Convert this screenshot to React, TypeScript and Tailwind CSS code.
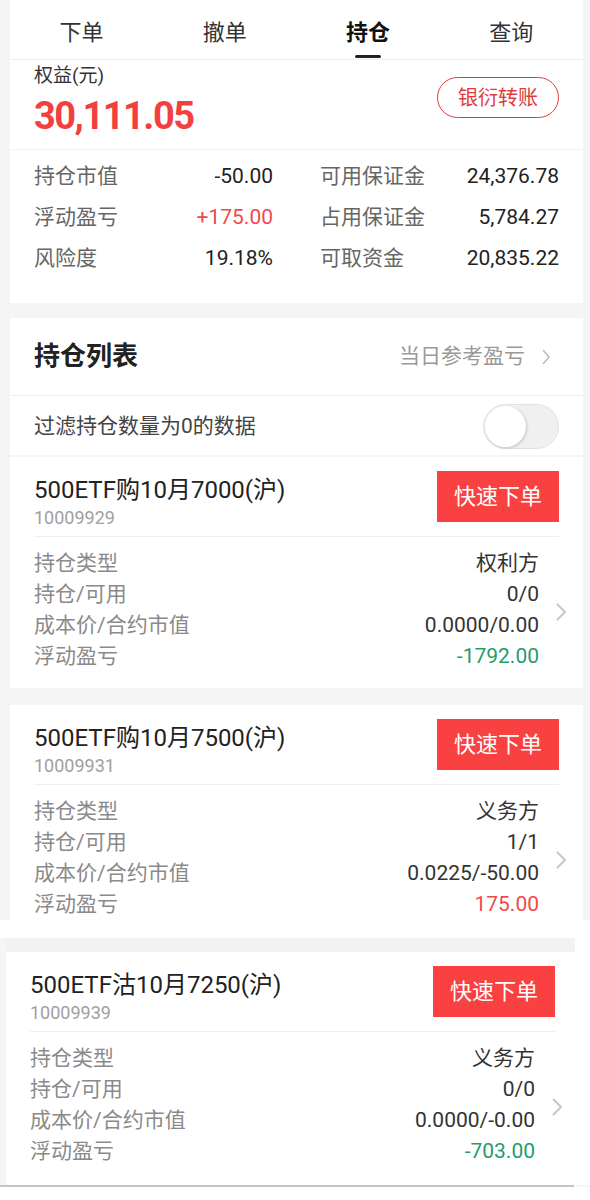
import React from "react";

const FONT = { fontFamily: 'Roboto, "Noto Sans CJK SC", "Noto Sans", sans-serif' };

function Chevron({ w = 11, h = 18, color = "#c8c8c8", sw = 2 }: { w?: number; h?: number; color?: string; sw?: number }) {
  return (
    <svg width={w} height={h} viewBox={`0 0 ${w} ${h}`} fill="none">
      <polyline points={`1.5,1.5 ${w - 2},${h / 2} 1.5,${h - 1.5}`} stroke={color} strokeWidth={sw} strokeLinecap="round" strokeLinejoin="round" />
    </svg>
  );
}

type Row = { label: string; value: string; color?: string };

function PositionCard({ title, code, rows, className = "" }: { title: string; code: string; rows: Row[]; className?: string }) {
  return (
    <div className={`bg-white pt-[14px] ${className}`}>
      <div className="flex justify-between items-start h-[51px] px-[24px]">
        <div className="pt-[5px]">
          <div className="text-[24px] leading-[28px] text-[#222]">{title}</div>
          <div className="text-[18px] leading-[28px] text-[#a0a0a0]">{code}</div>
        </div>
        <div className="w-[122px] h-[51px] bg-[#fa4141] text-white text-[22px] flex items-center justify-center">快速下单</div>
      </div>
      <div className="px-[24px] pt-[14px]">
        <div className="border-t border-[#efefef]" />
      </div>
      <div className="flex items-center pt-[11px] pl-[24px]">
        <div className="flex-1">
          {rows.map((r) => (
            <div key={r.label} className="flex justify-between h-[31px] leading-[31px] text-[21px]">
              <span className="text-[#8a8a8a]">{r.label}</span>
              <span style={{ color: r.color ?? "#333" }}>{r.value}</span>
            </div>
          ))}
        </div>
        <div className="w-[44px] flex justify-center pt-[4px]">
          <Chevron />
        </div>
      </div>
    </div>
  );
}

export default function App() {
  const tabs = ["下单", "撤单", "持仓", "查询"];
  const stats: [string, string, string?][] = [
    ["持仓市值", "-50.00"],
    ["可用保证金", "24,376.78"],
    ["浮动盈亏", "+175.00", "#f04a4a"],
    ["占用保证金", "5,784.27"],
    ["风险度", "19.18%"],
    ["可取资金", "20,835.22"],
  ];
  return (
    <div className="w-[590px] min-h-[1200px] bg-[#f5f5f5]" style={FONT}>
      {/* account summary */}
      <div className="ml-[10px] w-[573px] bg-white">
        <div className="flex h-[60px] border-b border-[#eeeeee]">
          {tabs.map((t) => (
            <div key={t} className="flex-1 flex flex-col items-center pt-[19px]">
              <div className={`text-[22px] leading-[28px] ${t === "持仓" ? "font-bold text-[#111]" : "text-[#333]"}`}>{t}</div>
              {t === "持仓" && <div className="mt-[8px] h-[3px] w-[26px] rounded-full bg-[#222]" />}
            </div>
          ))}
        </div>
        <div className="flex justify-between px-[24px] h-[90px] border-b border-[#f2f2f2]">
          <div className="pt-[4px]">
            <div className="text-[19px] leading-[24px] text-[#333]">权益(元)</div>
            <div className="mt-[5px] text-[38px] leading-[46px] font-bold text-[#f43f3f] tracking-[-1.5px]">30,111.05</div>
          </div>
          <div className="mt-[17px] w-[122px] h-[41px] rounded-full border-[1.5px] border-[#e23a3a] text-[#e23a3a] text-[20px] flex items-center justify-center">银衍转账</div>
        </div>
        <div className="grid grid-cols-2 gap-x-[47px] px-[24px] pt-[6px] pb-[24px]">
          {stats.map(([l, v, c]) => (
            <div key={l} className="flex justify-between h-[41px] leading-[41px] text-[21px]">
              <span className="text-[#666]">{l}</span>
              <span style={{ color: c ?? "#222" }}>{v}</span>
            </div>
          ))}
        </div>
      </div>

      {/* list header */}
      <div className="ml-[10px] w-[573px] bg-white mt-[15px]">
        <div className="flex items-center justify-between h-[78px] pl-[24px] pr-[32px] border-b border-[#efefef]">
          <div className="text-[26px] font-bold text-[#222]">持仓列表</div>
          <div className="flex items-center gap-[17px] text-[21px] text-[#999]">
            <span>当日参考盈亏</span>
            <Chevron w={9} h={16} color="#bbbbbb" sw={1.6} />
          </div>
        </div>
        <div className="flex items-center justify-between h-[59px] px-[24px] pt-[2px]">
          <span className="text-[21px] text-[#444]">过滤持仓数量为0的数据</span>
          <div className="w-[76px] h-[45px] rounded-full bg-[#f0f0f0] border border-[#e2e2e2] p-[1px] flex items-center">
            <div className="w-[41px] h-[41px] rounded-full bg-white shadow-[1px_1px_3px_rgba(0,0,0,0.18)]" />
          </div>
        </div>
      </div>

      <PositionCard
        className="ml-[10px] w-[573px] mt-[2px] pb-[16px]"
        title="500ETF购10月7000(沪)"
        code="10009929"
        rows={[
          { label: "持仓类型", value: "权利方" },
          { label: "持仓/可用", value: "0/0" },
          { label: "成本价/合约市值", value: "0.0000/0.00" },
          { label: "浮动盈亏", value: "-1792.00", color: "#1f9d6b" },
        ]}
      />
      <div className="h-[17px]" />
      <div className="ml-[10px] w-[573px] h-[215px] overflow-hidden">
        <PositionCard
          className="pb-[17px]"
          title="500ETF购10月7500(沪)"
          code="10009931"
          rows={[
            { label: "持仓类型", value: "义务方" },
            { label: "持仓/可用", value: "1/1" },
            { label: "成本价/合约市值", value: "0.0225/-50.00" },
            { label: "浮动盈亏", value: "175.00", color: "#f04a4a" },
          ]}
        />
      </div>
      <div className="h-[18px] bg-white" />
      <div className="flex bg-white">
        <div className="w-[6px] bg-[#f5f5f5]" />
        <div className="w-[573px]">
          <div className="h-[14px] w-[569px] bg-[#f2f2f2]" />
          <PositionCard
            className="pb-[18px]"
            title="500ETF沽10月7250(沪)"
            code="10009939"
            rows={[
              { label: "持仓类型", value: "义务方" },
              { label: "持仓/可用", value: "0/0" },
              { label: "成本价/合约市值", value: "0.0000/-0.00" },
              { label: "浮动盈亏", value: "-703.00", color: "#1f9d6b" },
            ]}
          />
        </div>
        <div className="flex-1" />
      </div>
      <div className="h-[2px] w-[574px] bg-[#c4c4c4]" />
      <div className="h-[20px] bg-white" />
    </div>
  );
}
